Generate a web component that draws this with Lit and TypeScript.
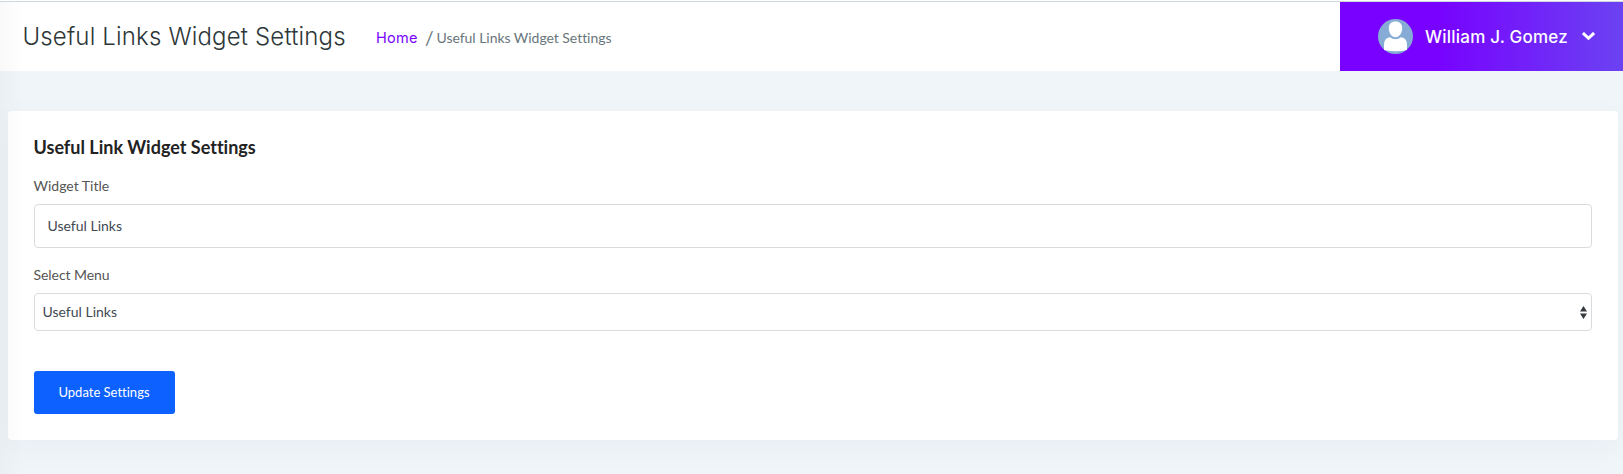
import { LitElement, html, css } from "lit";
import { customElement, state } from "lit/decorators.js";

@customElement("app-root")
export class AppRoot extends LitElement {
  @state() private widgetTitle = "Useful Links";

  static styles = css`
    :host {
      display: block;
      position: relative;
      height: 474px;
      overflow: hidden;
      background: #f0f5fa;
      font-family: Lato, sans-serif;
      color: #212529;
    }
    * { box-sizing: border-box; font-variant-ligatures: none !important; }
    .edge {
      position: absolute;
      inset: 2px auto 0 0;
      width: 24px;
      background: linear-gradient(90deg, rgba(0, 0, 0, 0.022), rgba(0, 0, 0, 0));
      pointer-events: none;
    }
    header {
      display: flex;
      align-items: stretch;
      height: 71px;
      padding-top: 1px;
      background: #fff;
    }
    .bar {
      display: flex;
      flex: 1;
      border-top: 1px solid #cdd6dc;
    }
    .heading {
      display: flex;
      flex: 1;
      align-items: center;
      padding-left: 22.5px;
    }
    h1 {
      margin: 0;
      width: 353.5px;
      font: 300 24px/36px Inter, sans-serif;
      letter-spacing: 0.16px;
      color: #2d3638;
      white-space: nowrap;
    }
    .crumbs {
      display: flex;
      align-items: center;
      padding-top: 2px;
      font-size: 14px;
      line-height: 20px;
      color: #68767b;
    }
    .home {
      width: 42px;
      font: 400 14.5px/20px Inter, sans-serif;
      letter-spacing: 0.3px;
      color: #7801ff;
      text-decoration: none;
    }
    .slash { width: 18.5px; padding-left: 7px; font-size: 19px; }
    .here { letter-spacing: -0.04px; }
    .user {
      display: flex;
      align-items: center;
      width: 283px;
      padding-left: 38px;
      color: #fff;
      background: linear-gradient(90deg, #7801ff 0%, #7801ff 33%, #6b42f2 100%);
    }
    .avatar { width: 35px; height: 35px; margin-right: 12px; }
    .name {
      width: 157px;
      font: 500 17px/24px Inter, sans-serif;
      letter-spacing: 0.22px;
      white-space: nowrap;
    }
    .chev { width: 13px; height: 9px; }
    .card {
      display: flex;
      flex-direction: column;
      align-items: stretch;
      margin: 40px 5px 0 8px;
      height: 329px;
      padding: 24px 26px 26px;
      border-radius: 4px;
      background: #fff;
      box-shadow: 0 8px 30px rgba(0, 60, 60, 0.04);
    }
    h2 { margin: 0 0 0 -0.5px; font-size: 18px; line-height: 24px; font-weight: 700; color: #222; }
    label { margin-left: -0.5px; font-size: 14px; line-height: 20px; color: #555; }
    .l1, .l2 { margin-top: 17px; }
    .l2 { letter-spacing: -0.06px; }
    .field {
      display: block;
      width: 100%;
      margin: 8px 0 0;
      border: 1px solid #dadbdc;
      border-radius: 4px;
      font: 400 14px/20px Lato, sans-serif;
      color: #414951;
      background: #fff;
      outline: none;
    }
    .input { height: 44px; padding: 0 12.5px 1px; }
    .select {
      display: flex;
      align-items: center;
      justify-content: space-between;
      height: 38px;
      padding: 0 4px 0 7.5px;
    }
    .arrows { width: 7px; height: 13px; }
    button {
      align-self: flex-start;
      width: 141px;
      height: 43px;
      margin-top: 40px;
      padding: 0 1px 2px 0;
      border: 0;
      border-radius: 3px;
      font: 400 13px/18px Lato, sans-serif;
      color: #fff;
      background: #0d61ff;
    }
  `;

  render() {
    return html`
      <header>
        <div class="bar">
          <div class="heading">
            <h1><span>Useful Links Widget Settings</span></h1>
            <nav class="crumbs">
              <a class="home">Home</a><span class="slash">/</span><span class="here">Useful Links Widget Settings</span>
            </nav>
          </div>
          <div class="user">
            <svg class="avatar" viewBox="0 0 35 35">
              <circle cx="17.5" cy="17.5" r="17.5" fill="#86acd6" />
              <path fill="#fff" d="M17.500 2.500c4.200 0 6.700 2.600 6.700 6.500 0 5-2.800 9.200-6.700 9.200s-6.700-4.200-6.700-9.200c0-3.900 2.500-6.500 6.700-6.500z" />
              <path fill="#fff" d="M6 31v-5q0-7 6-7.700 2.500 1.900 5.500 1.900t5.500-1.900q6 .7 6 7.700v5q-5 1.300-11.500 1.300t-11.500-1.300z" />
            </svg>
            <span class="name">William J. Gomez</span>
            <svg class="chev" viewBox="0 0 13 9">
              <path d="M2 2L6.500 6.300L11 2" fill="none" stroke="#fff" stroke-width="3" stroke-linejoin="miter" stroke-linecap="square" />
            </svg>
          </div>
        </div>
      </header>
      <main class="card">
        <h2><span>Useful Link Widget Settings</span></h2>
        <label class="l1"><span>Widget Title</span></label>
        <input class="field input" .value=${this.widgetTitle} />
        <label class="l2"><span>Select Menu</span></label>
        <div class="field select">
          <span>Useful Links</span>
          <svg class="arrows" viewBox="0 0 7 13">
            <path d="M3.500 0L7 5.500H0zM3.500 13L0 7.500H7z" fill="#343a40" />
          </svg>
        </div>
        <button><span>Update Settings</span></button>
      </main>
      <div class="edge"></div>
    `;
  }
}
